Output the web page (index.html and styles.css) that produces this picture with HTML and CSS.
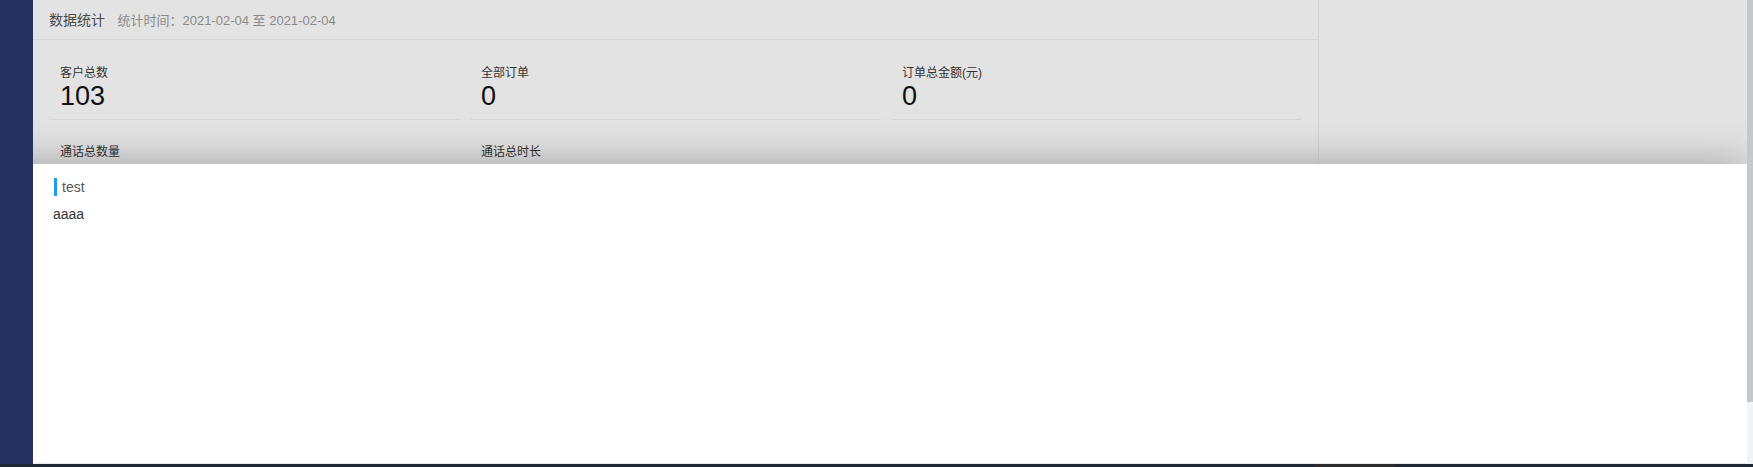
FILE: index.html
```html
<!DOCTYPE html>
<html lang="zh-CN">
<head>
<meta charset="utf-8">
<title>数据统计</title>
<link rel="stylesheet" href="styles.css">
</head>
<body>
<div class="app">
  <aside class="sidebar"></aside>
  <div class="main">
    <div class="page">
      <section class="stats">
        <div class="stats-head">
          <span class="stats-title">数据统计</span>
          <span class="stats-range">统计时间：2021-02-04 至 2021-02-04</span>
        </div>
        <div class="cards">
          <div class="card"><div class="card-label">客户总数</div><div class="card-value">103</div></div>
          <div class="card"><div class="card-label">全部订单</div><div class="card-value">0</div></div>
          <div class="card"><div class="card-label">订单总金额(元)</div><div class="card-value">0</div></div>
          <div class="card"><div class="card-label">通话总数量</div><div class="card-value">0</div></div>
          <div class="card"><div class="card-label">通话总时长</div><div class="card-value">0</div></div>
        </div>
      </section>
      <aside class="side-panel"></aside>
    </div>
    <div class="drawer">
      <div class="drawer-title">test</div>
      <div class="drawer-body">aaaa</div>
    </div>
  </div>
  <div class="vscroll"><div class="vthumb"></div></div>
</div>
<div class="hbar"><div class="hthumb"></div></div>
</body>
</html>
```
FILE: styles.css
```css
html, body {
  margin: 0;
  padding: 0;
}
body {
  width: 1753px;
  height: 467px;
  overflow: hidden;
  font-family: "Liberation Sans", "Noto Sans CJK SC", sans-serif;
  background: #ffffff;
}
.app {
  display: flex;
  height: 464px;
}
.sidebar {
  width: 33px;
  flex: none;
  background: #263361;
}
.main {
  flex: 1;
  position: relative;
  overflow: hidden;
  background: #e3e3e3;
}
.page {
  display: flex;
  height: 100%;
}
.stats {
  width: 1285px;
  flex: none;
}
.stats-head {
  height: 39px;
  line-height: 39px;
  padding: 0 16px;
  border-bottom: 1px solid #d7d7d7;
  white-space: nowrap;
}
.stats-title {
  font-size: 14px;
  color: #4a4a4a;
}
.stats-range {
  font-size: 13px;
  color: #8a8a8a;
  margin-left: 8px;
}
.cards {
  display: grid;
  grid-template-columns: repeat(3, 1fr);
  column-gap: 10px;
  row-gap: 14px;
  padding: 15px 16px;
}
.card {
  padding: 10px 11px 8px;
  border-bottom: 1px solid #d6d6d6;
  border-radius: 2px;
}
.card-label {
  font-size: 12px;
  line-height: 16px;
  color: #333;
}
.card-value {
  font-size: 27px;
  line-height: 30px;
  color: #111;
}
.side-panel {
  flex: 1;
  border-left: 1px solid #d5d5d5;
}
.drawer {
  position: absolute;
  top: 164px;
  left: -60px;
  right: 0;
  bottom: 0;
  padding: 14px 20px 0 80px;
  background: #ffffff;
  border-bottom: 1px solid #e6e9ee;
  box-shadow: 0 0 40px rgba(0, 0, 0, 0.3);
}
.drawer-title {
  height: 18px;
  line-height: 18px;
  font-size: 14px;
  color: #555;
  border-left: 3px solid #1a9ff0;
  padding-left: 5px;
  margin-left: 1px;
}
.drawer-body {
  margin-top: 8px;
  font-size: 14px;
  line-height: 20px;
  color: #333;
}
.vscroll {
  width: 6px;
  flex: none;
  background: #f1f3f8;
}
.vthumb {
  height: 402px;
  background: #c5c7cc;
}
.hbar {
  height: 3px;
  background: #1d2834;
}
.hthumb {
  width: 82px;
  height: 3px;
  margin-left: 1313px;
  background: #2b2b2b;
  border-radius: 2px 2px 0 0;
}
```
